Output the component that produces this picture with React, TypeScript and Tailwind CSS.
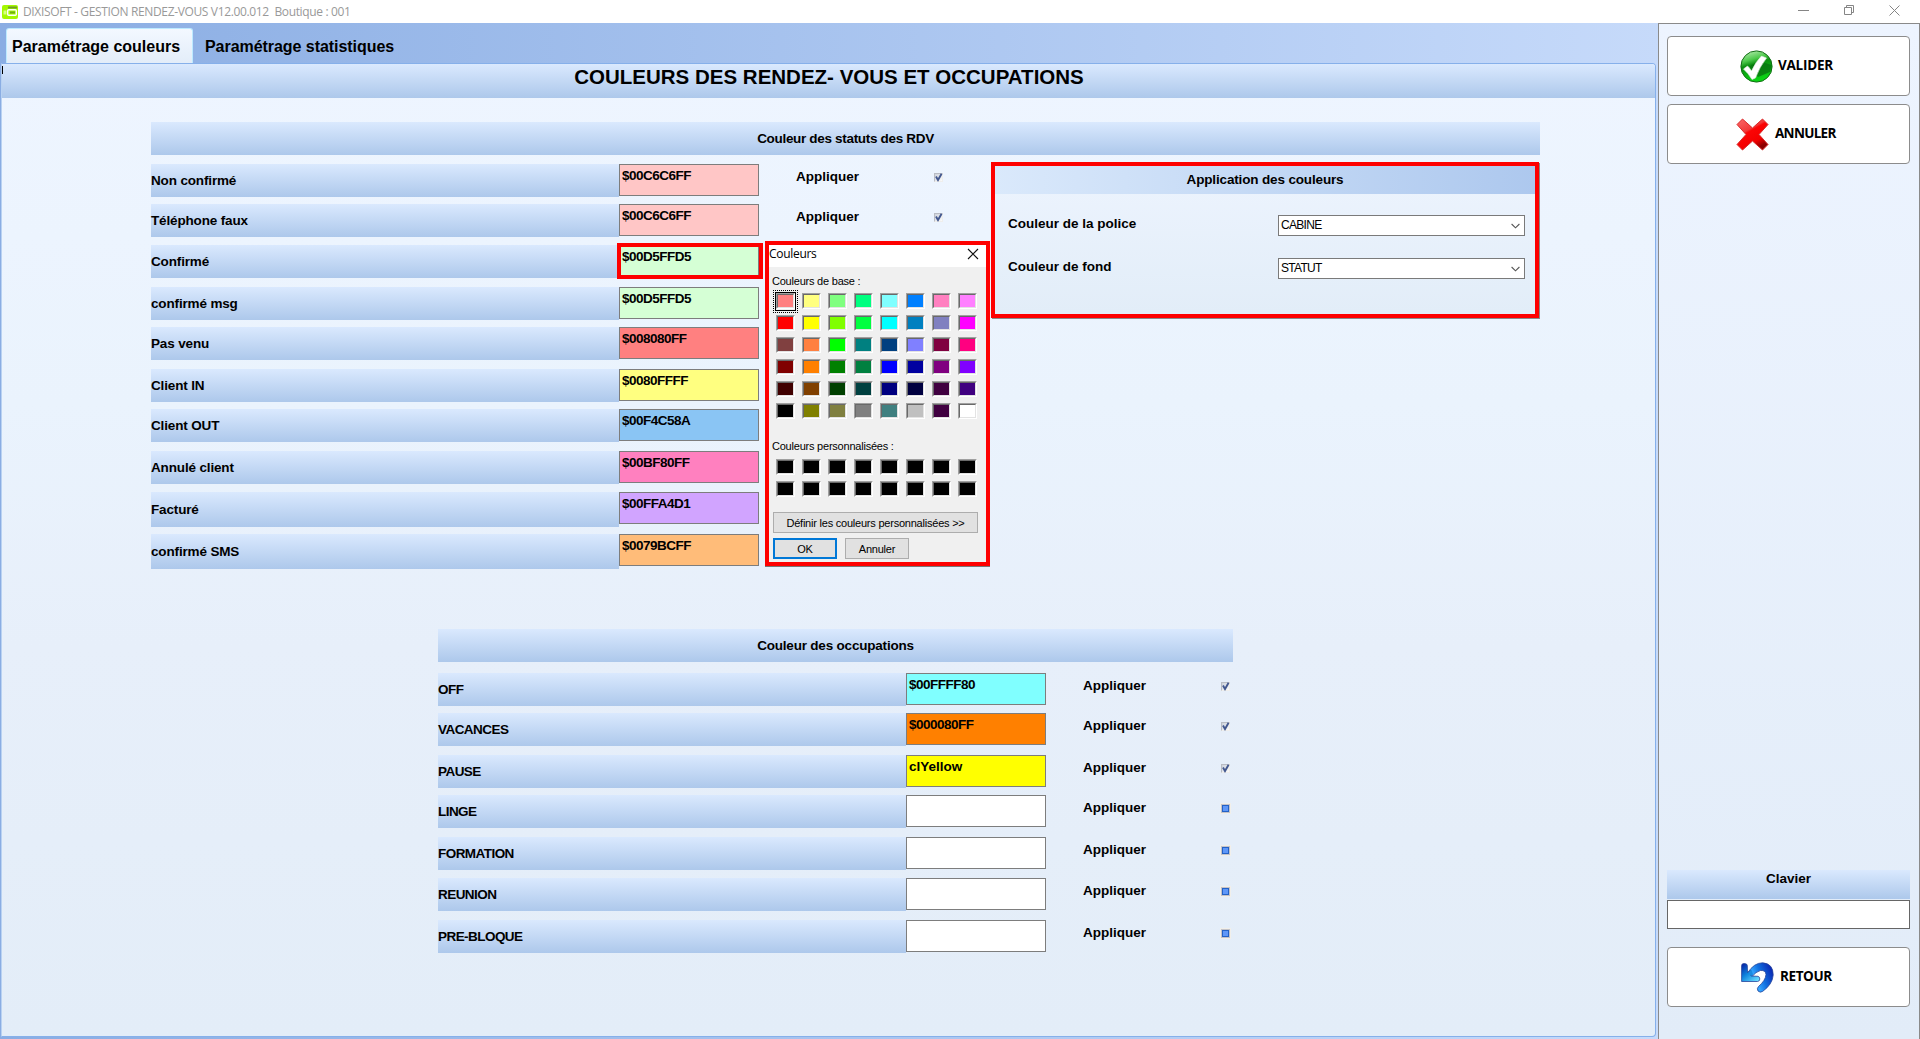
import React from "react";

const bar = "bg-linear-to-b from-[#dae9fe] to-[#adc8eb]";
const label = "font-['Liberation_Sans',sans-serif] text-[13.5px] font-bold text-black leading-[16px] whitespace-nowrap";

type Row = { name: string; value?: string; color: string; gap: string; tall?: boolean; check?: "on" | "off"; marked?: boolean };

const statuts: Row[] = [
  { name: "Non confirmé", value: "$00C6C6FF", color: "bg-[#ffc6c6]", gap: "mt-[9px]", check: "on" },
  { name: "Téléphone faux", value: "$00C6C6FF", color: "bg-[#ffc6c6]", gap: "mt-[7px]", check: "on" },
  { name: "Confirmé", value: "$00D5FFD5", color: "bg-[#d5ffd5]", gap: "mt-[8px]", marked: true },
  { name: "confirmé msg", value: "$00D5FFD5", color: "bg-[#d5ffd5]", gap: "mt-[9px]" },
  { name: "Pas venu", value: "$008080FF", color: "bg-[#ff8080]", gap: "mt-[7px]" },
  { name: "Client IN", value: "$0080FFFF", color: "bg-[#ffff80]", gap: "mt-[9px]" },
  { name: "Client OUT", value: "$00F4C58A", color: "bg-[#8ac5f4]", gap: "mt-[7px]" },
  { name: "Annulé client", value: "$00BF80FF", color: "bg-[#ff80bf]", gap: "mt-[9px]" },
  { name: "Facturé", value: "$00FFA4D1", color: "bg-[#d1a4ff]", gap: "mt-[8px]", tall: true },
  { name: "confirmé SMS", value: "$0079BCFF", color: "bg-[#ffbc79]", gap: "mt-[7px]", tall: true },
];

const occupations: Row[] = [
  { name: "OFF", value: "$00FFFF80", color: "bg-[#80ffff]", gap: "mt-[11px]", check: "on" },
  { name: "VACANCES", value: "$000080FF", color: "bg-[#ff8000]", gap: "mt-[7px]", check: "on" },
  { name: "PAUSE", value: "clYellow", color: "bg-[#ffff00]", gap: "mt-[9px]", check: "on" },
  { name: "LINGE", color: "bg-white", gap: "mt-[7px]", check: "off" },
  { name: "FORMATION", color: "bg-white", gap: "mt-[9px]", check: "off" },
  { name: "REUNION", color: "bg-white", gap: "mt-[8px]", check: "off" },
  { name: "PRE-BLOQUE", color: "bg-white", gap: "mt-[9px]", check: "off" },
];

const baseColors = [
  "bg-[#ff8080]", "bg-[#ffff80]", "bg-[#80ff80]", "bg-[#00ff80]", "bg-[#80ffff]", "bg-[#0080ff]", "bg-[#ff80c0]", "bg-[#ff80ff]",
  "bg-[#ff0000]", "bg-[#ffff00]", "bg-[#80ff00]", "bg-[#00ff40]", "bg-[#00ffff]", "bg-[#0080c0]", "bg-[#8080c0]", "bg-[#ff00ff]",
  "bg-[#804040]", "bg-[#ff8040]", "bg-[#00ff00]", "bg-[#008080]", "bg-[#004080]", "bg-[#8080ff]", "bg-[#800040]", "bg-[#ff0080]",
  "bg-[#800000]", "bg-[#ff8000]", "bg-[#008000]", "bg-[#008040]", "bg-[#0000ff]", "bg-[#0000a0]", "bg-[#800080]", "bg-[#8000ff]",
  "bg-[#400000]", "bg-[#804000]", "bg-[#004000]", "bg-[#004040]", "bg-[#000080]", "bg-[#000040]", "bg-[#400040]", "bg-[#400080]",
  "bg-[#000000]", "bg-[#808000]", "bg-[#808040]", "bg-[#808080]", "bg-[#408080]", "bg-[#c0c0c0]", "bg-[#400040]", "bg-[#ffffff]",
];

function Check({ on }: { on: boolean }) {
  if (!on)
    return (
      <span className="block h-[9px] w-[9px] border border-[#c3c3c9] bg-[#5f97f8] outline outline-[#f1efea]">
        <span className="block h-[7px] w-[7px] border border-[#2462c6]" />
      </span>
    );
  return (
    <span className="block h-[9px] w-[9px] border border-[#b9bcc4] border-r-[#efeeec] border-b-[#efeeec] bg-linear-to-br from-[#cdd2db] to-[#fbfbfb]">
      <svg className="-mt-px h-[9px] w-[9px] overflow-visible" viewBox="0 0 9 9">
        <path d="M1 3.6 L3 7 L6.6 .8" fill="none" stroke="#43588f" strokeWidth="1.9" />
      </svg>
    </span>
  );
}

function ColorRow({ row }: { row: Row }) {
  const upperCase = row.name === row.name.toUpperCase();
  const hex = row.value?.startsWith("$");
  return (
    <div className={`flex items-start ${row.gap} ${row.tall ? "h-[35px]" : "h-[33px]"}`}>
      <div className={`flex h-full w-[468px] items-center pt-px ${bar} ${label} ${upperCase ? "tracking-[-0.55px]" : "tracking-[-0.15px]"}`}>{row.name}</div>
      <div className={`relative h-[32px] w-[140px] border border-[#7d7d7d] pt-[3px] pl-[2px] ${row.color} ${label} ${hex ? "tracking-[-0.5px]" : ""}`}>
        {row.value}
        {row.marked && <span className="absolute -top-[3px] -left-[3px] h-[36px] w-[146px] border-4 border-[#fe0000]" />}
      </div>
      {row.check && (
        <>
          <div className={`ml-[37px] w-[138px] pt-[5px] ${label}`}>Appliquer</div>
          <div className="pt-[9px]"><Check on={row.check === "on"} /></div>
        </>
      )}
    </div>
  );
}

function Swatch({ color, selected }: { color: string; selected?: boolean }) {
  return (
    <div className="relative h-[16px] w-[19px] border border-t-[#a0a0a0] border-r-white border-b-white border-l-[#a0a0a0]">
      <div className={`h-full w-full border border-t-[#696969] border-r-[#e3e3e3] border-b-[#e3e3e3] border-l-[#696969] ${color}`} />
      {selected && (
        <>
          <span className="absolute -top-[2px] -left-[2px] h-[19px] w-[21px] border border-black" />
          <span className="absolute -top-[4px] -left-[4px] h-[23px] w-[25px] border border-dotted border-black" />
        </>
      )}
    </div>
  );
}

const dialogText = "font-['Liberation_Sans',sans-serif] text-[11px] leading-[14px] tracking-[-0.22px] text-black whitespace-nowrap";

function ColorDialog() {
  return (
    <div className="absolute top-[77px] left-[614px] flex h-[325px] w-[225px] flex-col border-4 border-[#fe0000] bg-[#f0f0f0] shadow-[0_1px_0_#777]">
      <div className="flex h-[22px] items-start justify-between bg-white pr-[7px]">
        <span className="pt-px font-['Open_Sans',sans-serif] text-[12px] leading-[15px] tracking-[-0.3px] text-black">Couleurs</span>
        <svg className="mt-[3px]" width="12" height="12" viewBox="0 0 12 12"><path d="M1 1 L11 11 M11 1 L1 11" stroke="#111" strokeWidth="1.1" /></svg>
      </div>
      <div className={`mt-[7px] ml-[3px] ${dialogText}`}>Couleurs de base :</div>
      <div className="mt-[5px] ml-[7px] grid w-max grid-cols-8 gap-x-[7px] gap-y-[6px]">
        {baseColors.map((c, i) => <Swatch key={i} color={c} selected={i === 0} />)}
      </div>
      <div className={`mt-[20px] ml-[3px] ${dialogText}`}>Couleurs personnalisées :</div>
      <div className="mt-[6px] ml-[7px] grid w-max grid-cols-8 gap-x-[7px] gap-y-[6px]">
        {Array.from({ length: 16 }, (_, i) => <Swatch key={i} color="bg-black" />)}
      </div>
      <div className={`mt-[15px] ml-[4px] flex h-[21px] w-[205px] items-center justify-center border border-[#adadad] bg-[#e1e1e1] ${dialogText}`}>
        Définir les couleurs personnalisées &gt;&gt;
      </div>
      <div className="mt-[5px] ml-[4px] flex gap-[8px]">
        <div className={`flex h-[21px] w-[64px] items-center justify-center border-2 border-[#0078d7] bg-[#e1e1e1] ${dialogText}`}>OK</div>
        <div className={`flex h-[21px] w-[64px] items-center justify-center border border-[#adadad] bg-[#e1e1e1] ${dialogText}`}>Annuler</div>
      </div>
    </div>
  );
}

function Combo({ text }: { text: string }) {
  return (
    <div className="flex h-[21px] w-[247px] items-center justify-between border border-[#7a7a7a] bg-white pr-[4px] pl-[2px]">
      <span className="pb-[2px] font-['Liberation_Sans',sans-serif] text-[12px] leading-[14px] tracking-[-0.7px] text-black">{text}</span>
      <svg width="9" height="6" viewBox="0 0 9 6"><path d="M.6 1 L4.5 4.8 L8.4 1" fill="none" stroke="#555" strokeWidth="1.1" /></svg>
    </div>
  );
}

function ApplicationPanel() {
  return (
    <div className="absolute -top-[2px] left-[840px] h-[156px] w-[548px] border-4 border-[#fe0000] bg-linear-to-b from-[#edf4fe] to-[#e2edf8] shadow-[1px_1px_0_#8a8a8a]">
      <div className={`flex h-[28px] items-center justify-center bg-linear-to-r from-[#dae9fb] to-[#adc8ee] tracking-[-0.15px] ${label}`}>Application des couleurs</div>
      <div className="mt-[21px] flex items-start justify-between pr-[10px] pl-[13px]">
        <span className={`pt-px ${label}`}>Couleur de la police</span>
        <Combo text="CABINE" />
      </div>
      <div className="mt-[22px] flex items-start justify-between pr-[10px] pl-[13px]">
        <span className={`pt-px ${label}`}>Couleur de fond</span>
        <Combo text="STATUT" />
      </div>
    </div>
  );
}

function SideButton({ children, text, className }: { children: React.ReactNode; text: string; className: string }) {
  return (
    <button className={`flex h-[60px] w-[243px] items-center rounded-[4px] border border-[#8c8c8c] bg-white font-['Open_Sans',sans-serif] text-[13.5px] leading-none font-bold text-black ${className}`}>
      {children}
      {text}
    </button>
  );
}

function ValidIcon() {
  return (
    <svg className="mt-px" width="33" height="33" viewBox="0 0 33 33">
      <defs>
        <linearGradient id="ok" x1="0" y1="0" x2="0.3" y2="1">
          <stop offset="0" stopColor="#c9f3c4" /><stop offset=".35" stopColor="#4cc94a" /><stop offset=".5" stopColor="#0c8f10" /><stop offset="1" stopColor="#0ad314" />
        </linearGradient>
      </defs>
      <circle cx="16.5" cy="16.5" r="15.6" fill="url(#ok)" stroke="#126b14" />
      <path d="M9 17 Q18 9 31.500 15 L30 22 L18 27 Z" fill="#087010" opacity=".75" />
      <path d="M3.5 19 L7.5 16 Q9 17 11.5 21 Q15.5 12 21.5 6 L26.5 8 Q19.500 17 15.500 28 L12 29.500 Q8 23 3.500 19 Z" fill="#fff" stroke="#dce9dc" strokeWidth=".6" />
    </svg>
  );
}

function CancelIcon() {
  return (
    <svg className="mt-px" width="33" height="33" viewBox="0 0 33 33">
      <defs>
        <linearGradient id="no" x1="0" y1="0" x2=".55" y2="1">
          <stop offset="0" stopColor="#fb6a6a" /><stop offset=".42" stopColor="#f23838" /><stop offset=".48" stopColor="#fb0505" /><stop offset=".8" stopColor="#f40000" /><stop offset="1" stopColor="#8c0000" />
        </linearGradient>
      </defs>
      <path d="M1 6.500 L6.500 1 L16.500 10 L26.500 1 L32 6.500 L23 16.500 L32 26.500 L26.500 32 L16.500 23 L6.500 32 L1 26.500 L10 16.500 Z" fill="url(#no)" stroke="#d92a2a" strokeWidth="1" strokeLinejoin="round" />
    </svg>
  );
}

function BackIcon() {
  return (
    <svg width="33" height="31" viewBox="0 0 33 31">
      <defs>
        <linearGradient id="bk" x1="0" y1=".7" x2="1" y2=".2">
          <stop offset="0" stopColor="#19a5ea" /><stop offset=".3" stopColor="#35a4ff" /><stop offset=".55" stopColor="#1170e0" /><stop offset="1" stopColor="#0a1fae" />
        </linearGradient>
        <linearGradient id="bh" x1="0" y1="0" x2=".8" y2="1">
          <stop offset="0" stopColor="#0619a0" /><stop offset=".5" stopColor="#0d84dd" /><stop offset="1" stopColor="#6adcff" />
        </linearGradient>
      </defs>
      <path d="M6.500 11 Q13 .8 21.500 .8 Q32.200 1.500 32.200 13 Q31.500 22.500 21.500 29.500 Q19 31 17 29 Q15.500 26.500 17.500 24.500 Q24.500 18.500 25 12.500 Q24.500 8 19.500 8.500 Q15 9.500 10.500 15 Z" fill="url(#bk)" stroke="#26449b" strokeWidth=".8" />
      <path d="M.6 3.500 Q.6 1.500 3 1.500 Q6.300 1.500 6.300 3.500 L6.500 10.500 L9.500 8.500 L10 14 L17 14.300 Q18.800 14.800 18.800 17 Q18.800 19.300 16.500 19.500 L.6 19.500 Z" fill="url(#bh)" stroke="#26449b" strokeWidth=".8" />
      <path d="M7.300 10.700 L10.500 7.500 L12 12.500 L10 13.800 Z" fill="#1b8be2" />
    </svg>
  );
}

export default function App() {
  return (
    <div className="flex h-[1039px] w-[1920px] flex-col overflow-hidden bg-[#e8f1fc]">
      <header className="flex h-[23px] items-center bg-white">
        <svg className="ml-[2px]" width="16" height="14" viewBox="0 0 16 14">
          <rect width="16" height="14" rx="2" fill="#a4f800" />
          <rect x="6" y="1.500" width="9" height="2" fill="#6f9b2c" />
          <rect x="1.500" y="5.500" width="3" height="4" fill="#d6ff80" />
          <rect x="5.700" y="4.700" width="8.600" height="5.600" rx="1" fill="#a4f800" stroke="#fff" strokeWidth="1.400" />
          <rect x="8" y="6.500" width="5" height="2" fill="#6fae10" />
        </svg>
        <span className="ml-[5px] font-['Open_Sans',sans-serif] text-[12px] tracking-[-0.35px] whitespace-pre text-[#999]">DIXISOFT - GESTION RENDEZ-VOUS V12.00.012  Boutique : 001</span>
        <div className="mr-[20px] ml-auto flex items-center gap-[35px] pb-[3px] text-[#858585]">
          <svg width="11" height="11" viewBox="0 0 11 11"><path d="M0 5.500 H11" stroke="currentColor" /></svg>
          <svg width="10" height="10" viewBox="0 0 10 10"><path d="M.5 2.500 H7.500 V9.500 H.5 Z M2.500 2.500 V.5 H9.500 V7.500 H7.500" fill="none" stroke="currentColor" /></svg>
          <svg width="11" height="11" viewBox="0 0 11 11"><path d="M.5 .5 L10.500 10.500 M10.500 .5 L.5 10.500" stroke="currentColor" /></svg>
        </div>
      </header>

      <div className="flex flex-1">
        <main className="flex w-[1658px] flex-col bg-linear-to-r from-[#8aade3] to-[#c6dafa]">
          <nav className="flex h-[40px] items-end pl-[6px] font-['Liberation_Sans',sans-serif] text-[16px] leading-none font-bold text-black">
            <div className="flex h-[35px] w-[187px] items-center rounded-t-[3px] border border-b-0 border-[#bdeaff] bg-linear-to-b from-[#f3f8ff] to-[#e3edf9] pt-[2px] pl-[5px]">Paramétrage couleurs</div>
            <div className="flex h-[35px] items-center pt-[3px] pl-[12px] tracking-[-0.05px]">Paramétrage statistiques</div>
          </nav>
          <section className="relative mr-[2px] mb-[2px] ml-px flex flex-1 flex-col rounded-r-[4px] border-t border-r border-b border-l border-[#86b0ea] border-l-[#b9d2f2] bg-[linear-gradient(to_bottom,#eef5ff_0%,#eaf3fd_35%,#e7effa_60%,#e3edf8_100%)]">
            <span className="absolute top-[2px] left-0 h-[8px] w-px bg-black" />
            <div className={`flex h-[34px] items-start justify-center rounded-tr-[3px] pt-[3px] pl-px font-['Liberation_Sans',sans-serif] text-[20.5px] leading-[20px] font-bold text-black ${bar}`}>
              <span>COULEURS DES RENDEZ- VOUS ET OCCUPATIONS</span>
            </div>
            <div className="mt-[24px] ml-[149px] w-[1389px]">
              <div className={`flex h-[33px] items-center justify-center tracking-[-0.32px] ${bar} ${label}`}>Couleur des statuts des RDV</div>
              <div className="relative">
                {statuts.map((r) => <ColorRow key={r.name} row={r} />)}
                <ApplicationPanel />
                <ColorDialog />
              </div>
            </div>
            <div className="mt-[60px] ml-[436px] w-[795px]">
              <div className={`flex h-[33px] items-center justify-center tracking-[-0.2px] ${bar} ${label}`}>Couleur des occupations</div>
              {occupations.map((r) => <ColorRow key={r.name} row={r} />)}
            </div>
          </section>
        </main>

        <aside className="flex flex-1 flex-col border border-b-0 border-[#8a8a8a] bg-linear-to-b from-[#edf4ff] to-[#e2ecf8] pl-[8px]">
          <SideButton text="VALIDER" className="mt-[12px] gap-[5px] pl-[72px] tracking-[-0.25px]"><ValidIcon /></SideButton>
          <SideButton text="ANNULER" className="mt-[8px] gap-[6px] pl-[68px] tracking-[-0.7px]"><CancelIcon /></SideButton>
          <div className={`mt-auto flex h-[29px] w-[243px] justify-center pt-px ${bar} ${label}`}>Clavier</div>
          <div className="mt-px h-[29px] w-[243px] border border-[#666] bg-white" />
          <SideButton text="RETOUR" className="mt-[18px] mb-[32px] gap-[6px] pl-[73px] tracking-[-0.4px]"><BackIcon /></SideButton>
        </aside>
      </div>
    </div>
  );
}
